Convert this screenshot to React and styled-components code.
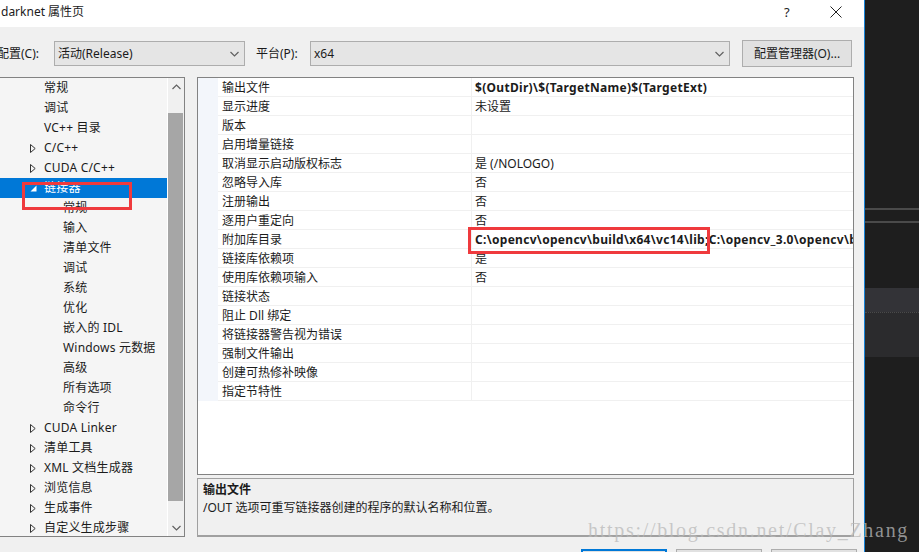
import React from 'react'
import styled, { createGlobalStyle } from 'styled-components'

const GlobalStyle = createGlobalStyle`
  html, body {
    margin: 0;
    padding: 0;
  }
  body {
    width: 919px;
    height: 552px;
    overflow: hidden;
    background: #1e1e1e;
    font-family: "Noto Sans", "Noto Sans CJK SC", sans-serif;
    font-size: 12px;
    color: #1b1b1b;
  }
  * { box-sizing: border-box; }
`

const Screen = styled.div`
  position: relative;
  display: flex;
  width: 919px;
  height: 552px;
  overflow: hidden;
`

const Dialog = styled.div`
  width: 865px;
  flex-shrink: 0;
  display: flex;
  flex-direction: column;
  background: #f0f0f0;
  border-right: 1px solid #1883d7;
  overflow: hidden;
  & > * { flex-shrink: 0; }
`

const TitleBar = styled.div`
  height: 27px;
  background: #fff;
  display: flex;
  align-items: center;
  padding-bottom: 4px;
  line-height: 16px;
`

const Title = styled.div`
  flex: 1;
  padding-left: 1px;
`

const Help = styled.div`
  width: 14px;
  margin-right: 32px;
  font-size: 13px;
  color: #222;
`

const Close = styled.div`
  width: 34px;
  display: flex;
  align-items: center;
`

const ConfigRow = styled.div`
  height: 50px;
  display: flex;
  align-items: flex-start;
  padding-top: 14px;
  line-height: 25px;
`

const Label = styled.div`
  width: ${p => p.$w}px;
  margin-left: ${p => p.$ml || 0}px;
  white-space: nowrap;
`

const Combo = styled.div`
  width: ${p => p.$w}px;
  height: 25px;
  border: 1px solid #adadad;
  background: #e5e5e5;
  display: flex;
  align-items: center;
  padding: 0 5px 0 3px;
  line-height: 23px;
  span { flex: 1; }
`

const Button = styled.div`
  width: 110px;
  height: 27px;
  margin-left: 12px;
  margin-top: -1px;
  border: 1px solid #adadad;
  background: #e1e1e1;
  display: flex;
  align-items: center;
  justify-content: center;
`

const Main = styled.div`
  height: 460px;
  display: flex;
  gap: 12px;
`

const Tree = styled.div`
  width: 195px;
  margin-left: -10px;
  border: 1px solid #828282;
  background: #f5f5f5;
  display: flex;
`

const TreeList = styled.div`
  position: relative;
  width: 176px;
  overflow: hidden;
  letter-spacing: 0.2px;
`

const TreeRow = styled.div`
  height: 20px;
  display: flex;
  align-items: center;
  padding-left: ${p => (p.$level === 2 ? 72 : 39)}px;
  white-space: nowrap;
  line-height: 20px;
  background: ${p => (p.$selected ? '#0078d7' : 'transparent')};
  color: ${p => (p.$selected ? '#fff' : '#1b1b1b')};
`

const Expander = styled.span`
  width: 14px;
  display: flex;
  align-items: center;
`

const RedMark = styled.div`
  position: absolute;
  border: 3px solid #ef3a3d;
  left: ${p => p.$x}px;
  top: ${p => p.$y}px;
  width: ${p => p.$w}px;
  height: ${p => p.$h}px;
  pointer-events: none;
  z-index: 2;
`

const Scrollbar = styled.div`
  width: 17px;
  border-left: 1px solid #fff;
  background: #f0f0f0;
  display: flex;
  flex-direction: column;
`

const ScrollArrow = styled.div`
  height: 17px;
  display: flex;
  align-items: center;
  justify-content: center;
`

const Track = styled.div`
  flex: 1;
  padding-top: 18px;
`

const Thumb = styled.div`
  height: 388px;
  background: #a6a6a6;
  margin-right: 1px;
`

const RightColumn = styled.div`
  width: 657px;
  display: flex;
  flex-direction: column;
  gap: 3px;
`

const Grid = styled.div`
  height: 398px;
  border: 1px solid #828282;
  background: #fff;
`

const GridRow = styled.div`
  position: relative;
  height: 19px;
  display: flex;
  line-height: 18px;
`

const Gutter = styled.div`
  width: 20px;
  background: #f3f6fb;
`

const NameCell = styled.div`
  width: 254px;
  padding: 1px 0 0 4px;
  border-bottom: 1px solid #f0f0f0;
  border-right: 1px solid #f0f0f0;
  white-space: nowrap;
`

const ValueCell = styled.div`
  flex: 1;
  padding: 1px 0 0 3px;
  border-bottom: 1px solid #f0f0f0;
  white-space: nowrap;
  overflow: hidden;
  font-weight: ${p => (p.$bold ? 700 : 400)};
  letter-spacing: ${p => (p.$bold ? '0.3px' : '0')};
`

const Description = styled.div`
  height: 59px;
  border: 1px solid #a0a0a0;
  border-bottom-width: 2px;
  padding: 2px 5px;
  line-height: 18px;
  strong { display: block; }
`

const Footer = styled.div`
  height: 15px;
  display: flex;
  justify-content: flex-end;
  align-items: flex-start;
  gap: 9px;
  padding: 12px 7px 0 0;
  overflow: hidden;
`

const FooterButton = styled.div`
  width: 86px;
  height: 23px;
  flex-shrink: 0;
  border: ${p => (p.$primary ? '2px solid #0078d7' : '1px solid #adadad')};
  background: #e1e1e1;
`

const DarkSide = styled.div`
  flex: 1;
  background: #1e1e1e;
  display: flex;
  flex-direction: column;
`

const DarkBlock = styled.div`
  height: ${p => p.$h}px;
  flex-shrink: 0;
  background: ${p => p.$bg || 'transparent'};
  border-top: ${p => p.$line || 'none'};
`

const Watermark = styled.div`
  position: absolute;
  left: 588px;
  top: 519px;
  font-family: "Liberation Serif", serif;
  font-size: 20px;
  letter-spacing: 1.7px;
  color: rgba(185, 185, 185, 0.75);
  white-space: nowrap;
  pointer-events: none;
`

const Chevron = ({ up, color = '#606060' }) => (
  <svg width="9" height="6" viewBox="0 0 9 6">
    <polyline
      points={up ? '0.5,5 4.5,1 8.5,5' : '0.5,1 4.5,5 8.5,1'}
      fill="none"
      stroke={color}
      strokeWidth="1.2"
    />
  </svg>
)

const Collapsed = () => (
  <svg width="6" height="9" viewBox="0 0 6 9">
    <polygon points="0.5,0.5 5.2,4.5 0.5,8.5" fill="none" stroke="#333" strokeWidth="1" />
  </svg>
)

const Expanded = () => (
  <svg width="7" height="7" viewBox="0 0 7 7">
    <polygon points="6.5,0.5 6.5,6.5 0.5,6.5" fill="#fff" />
  </svg>
)

const treeItems = [
  { text: '常规', level: 1 },
  { text: '调试', level: 1 },
  { text: 'VC++ 目录', level: 1 },
  { text: 'C/C++', level: 1, exp: 'c' },
  { text: 'CUDA C/C++', level: 1, exp: 'c' },
  { text: '链接器', level: 1, exp: 'e', selected: true },
  { text: '常规', level: 2 },
  { text: '输入', level: 2 },
  { text: '清单文件', level: 2 },
  { text: '调试', level: 2 },
  { text: '系统', level: 2 },
  { text: '优化', level: 2 },
  { text: '嵌入的 IDL', level: 2 },
  { text: 'Windows 元数据', level: 2 },
  { text: '高级', level: 2 },
  { text: '所有选项', level: 2 },
  { text: '命令行', level: 2 },
  { text: 'CUDA Linker', level: 1, exp: 'c' },
  { text: '清单工具', level: 1, exp: 'c' },
  { text: 'XML 文档生成器', level: 1, exp: 'c' },
  { text: '浏览信息', level: 1, exp: 'c' },
  { text: '生成事件', level: 1, exp: 'c' },
  { text: '自定义生成步骤', level: 1, exp: 'c' },
]

const properties = [
  ['输出文件', '$(OutDir)\\$(TargetName)$(TargetExt)', true],
  ['显示进度', '未设置'],
  ['版本', ''],
  ['启用增量链接', ''],
  ['取消显示启动版权标志', '是 (/NOLOGO)'],
  ['忽略导入库', '否'],
  ['注册输出', '否'],
  ['逐用户重定向', '否'],
  ['附加库目录', 'C:\\opencv\\opencv\\build\\x64\\vc14\\lib;C:\\opencv_3.0\\opencv\\build\\x64\\vc12\\lib', true, true],
  ['链接库依赖项', '是'],
  ['使用库依赖项输入', '否'],
  ['链接状态', ''],
  ['阻止 Dll 绑定', ''],
  ['将链接器警告视为错误', ''],
  ['强制文件输出', ''],
  ['创建可热修补映像', ''],
  ['指定节特性', ''],
]

export default function App() {
  return (
    <>
      <GlobalStyle />
      <Screen>
        <Dialog>
          <TitleBar>
            <Title>darknet 属性页</Title>
            <Help>?</Help>
            <Close>
              <svg width="12" height="12" viewBox="0 0 12 12">
                <path d="M0.5 0.5 L11.5 11.5 M11.5 0.5 L0.5 11.5" stroke="#222" strokeWidth="1" />
              </svg>
            </Close>
          </TitleBar>

          <ConfigRow>
            <Label $w={57} $ml={-3}>配置(C):</Label>
            <Combo $w={191}>
              <span>活动(Release)</span>
              <Chevron />
            </Combo>
            <Label $w={54} $ml={11}>平台(P):</Label>
            <Combo $w={420}>
              <span>x64</span>
              <Chevron />
            </Combo>
            <Button>配置管理器(O)...</Button>
          </ConfigRow>

          <Main>
            <Tree>
              <TreeList>
                {treeItems.map((item, i) => (
                  <TreeRow key={i} $level={item.level} $selected={item.selected}>
                    {item.level === 1 && (
                      <Expander>
                        {item.exp === 'c' && <Collapsed />}
                        {item.exp === 'e' && <Expanded />}
                      </Expander>
                    )}
                    {item.text}
                  </TreeRow>
                ))}
                <RedMark $x={31} $y={104} $w={110} $h={28} />
              </TreeList>
              <Scrollbar>
                <ScrollArrow>
                  <Chevron up />
                </ScrollArrow>
                <Track>
                  <Thumb />
                </Track>
                <ScrollArrow>
                  <Chevron />
                </ScrollArrow>
              </Scrollbar>
            </Tree>

            <RightColumn>
              <Grid>
                {properties.map(([name, value, bold, marked], i) => (
                  <GridRow key={i}>
                    <Gutter />
                    <NameCell>{name}</NameCell>
                    <ValueCell $bold={bold}>{value}</ValueCell>
                    {marked && <RedMark $x={270} $y={-3} $w={242} $h={27} />}
                  </GridRow>
                ))}
              </Grid>
              <Description>
                <strong>输出文件</strong>
                /OUT 选项可重写链接器创建的程序的默认名称和位置。
              </Description>
            </RightColumn>
          </Main>

          <Footer>
            <FooterButton $primary />
            <FooterButton />
            <FooterButton />
          </Footer>
        </Dialog>

        <DarkSide>
          <DarkBlock $h={208} />
          <DarkBlock $h={13} $line="2px solid #4a4a4a" />
          <DarkBlock $h={67} $line="2px solid #4a4a4a" />
          <DarkBlock $h={24} $bg="#333337" />
          <DarkBlock $h={45} $bg="#2b2b2d" $line="1px dotted #4a4a4a" />
        </DarkSide>

        <Watermark>https://blog.csdn.net/Clay_Zhang</Watermark>
      </Screen>
    </>
  )
}
